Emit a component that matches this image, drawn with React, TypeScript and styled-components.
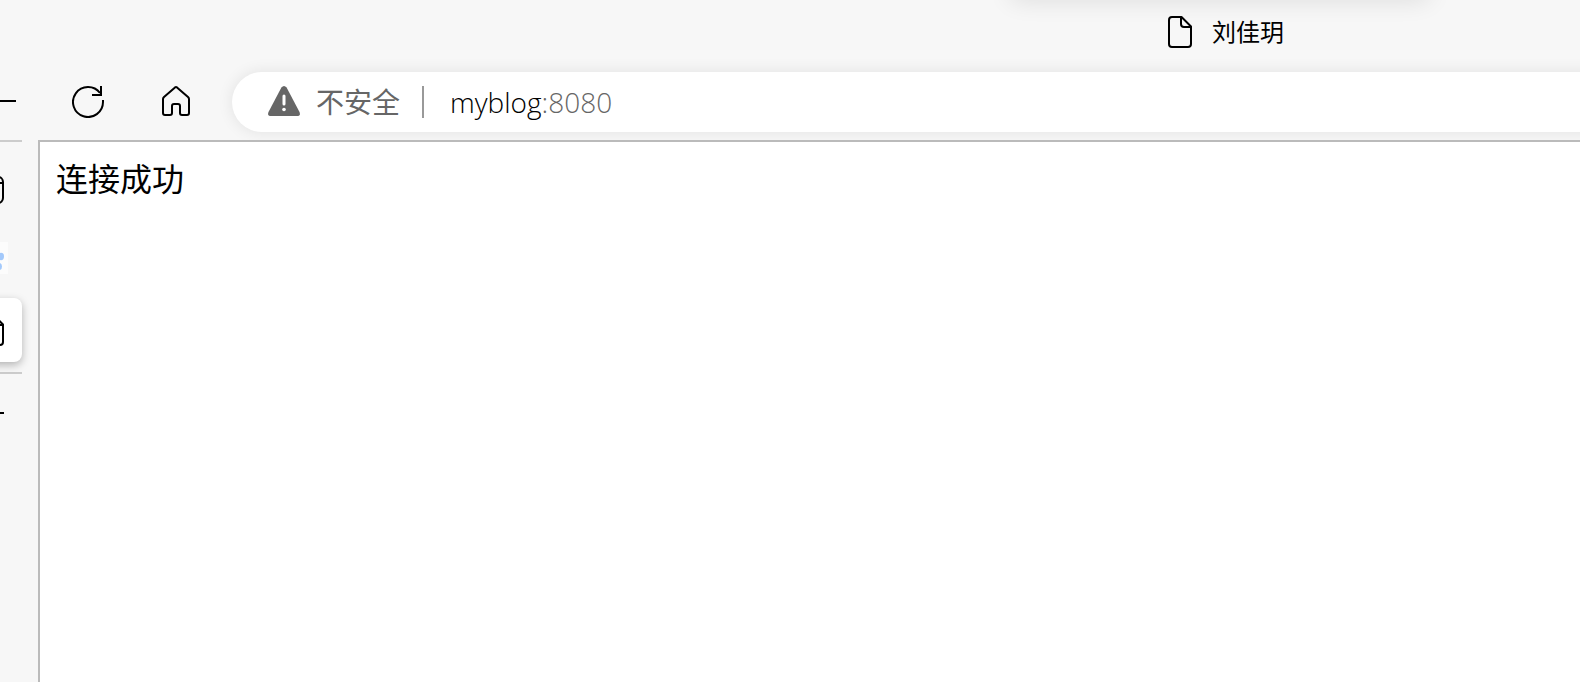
import React from "react";
import styled, { createGlobalStyle } from "styled-components";

const GlobalStyle = createGlobalStyle`
  * { box-sizing: border-box; }
  html, body, #root { height: 100%; }
  body {
    margin: 0;
    overflow: hidden;
    background: #f7f7f7;
    color: #000;
    font-family: "Open Sans", "Noto Sans CJK SC", sans-serif;
  }
  svg { display: block; flex: none; }
`;

const Window = styled.div`
  display: flex;
  flex-direction: column;
  min-height: 100vh;
  overflow: hidden;
`;

const TitleBar = styled.header`
  display: flex;
  justify-content: flex-end;
  align-items: center;
  gap: 20px;
  height: 64px;
  padding-right: 296px;
  position: relative;
`;

const HoverCardShadow = styled.div`
  position: absolute;
  right: 150px;
  bottom: 100%;
  width: 420px;
  height: 20px;
  border-radius: 8px;
  box-shadow: 0 0 24px rgba(0, 0, 0, 0.12);
`;

const WindowTitle = styled.h1`
  margin: 0;
  font-size: 24px;
  line-height: 32px;
  font-weight: 400;
`;

const Toolbar = styled.nav`
  display: flex;
  align-items: center;
  height: 76px;
  margin: 0 -24px 0 -44px;
`;

const IconButton = styled.button`
  display: flex;
  flex: none;
  justify-content: center;
  align-items: center;
  width: 88px;
  height: 60px;
  padding: 0;
  border: 0;
  background: none;
  color: inherit;
`;

const AddressBar = styled.div`
  display: flex;
  flex: 1;
  align-items: center;
  height: 60px;
  margin-left: 12px;
  padding-left: 36px;
  border-radius: 30px 0 0 30px;
  background: #fff;
  box-shadow: 0 0 16px rgba(0, 0, 0, 0.09);
  font-size: 28px;
  line-height: 40px;
`;

const SiteInfo = styled.button`
  display: flex;
  align-items: center;
  gap: 16px;
  padding: 0 22px 0 0;
  border: 0;
  background: none;
  color: #666;
  font: inherit;
  font-weight: 400;
`;

const Separator = styled.span`
  width: 2px;
  height: 32px;
  margin-right: 26px;
  background: #999;
`;

const Url = styled.div`
  flex: 1;
  font-weight: 300;
`;

const Port = styled.span`
  color: #666;
`;

const Body = styled.div`
  display: flex;
  flex: 1;
`;

const Sidebar = styled.aside`
  flex: none;
  width: 38px;
  padding-right: 16px;
`;

const Divider = styled.hr`
  height: 2px;
  margin: 0;
  border: 0;
  background: #ccc;
`;

const TabList = styled.div`
  display: flex;
  flex-direction: column;
  gap: 8px;
  padding: 12px 0 10px;
`;

const SideButton = styled.button<{ $active?: boolean }>`
  display: flex;
  justify-content: flex-end;
  align-items: center;
  width: 72px;
  height: 64px;
  margin-left: -50px;
  padding: 0 18px 0 0;
  border: 0;
  border-radius: 8px;
  background: ${(p) => (p.$active ? "#fff" : "none")};
  box-shadow: ${(p) => (p.$active ? "0 3px 9px rgba(0, 0, 0, 0.28)" : "none")};
  color: inherit;
`;

const NewTab = styled.div`
  padding-top: 8px;
`;

const Favicon = styled.span`
  display: flex;
  margin-right: -4px;
  background: #fcfcfc;
`;

const Page = styled.main`
  flex: 1;
  padding: 16px;
  border: solid #bbb;
  border-width: 2px 0 0 2px;
  background: #fff;
  font-size: 32px;
  line-height: 42px;
  font-weight: 400;
`;

const Message = styled.p`
  margin: 0;
`;

const stroke = { fill: "none", stroke: "currentColor", strokeWidth: 2 };

const DocumentIcon = () => (
  <svg width="24" height="32" viewBox="0 0 24 32" {...stroke} strokeLinejoin="round">
    <path d="M4 1H13.5L23 10.5V28Q23 31 20 31H4Q1 31 1 28V4Q1 1 4 1Z" />
    <path d="M13 1V8Q13 11 16 11H23" />
  </svg>
);

const PanelIcon = () => (
  <svg width="28" height="36" viewBox="0 0 28 36" {...stroke}>
    <rect x="1" y="9" width="26" height="26" rx="5" />
    <path d="M1 15H27" />
  </svg>
);

const BackIcon = () => (
  <svg width="32" height="32" viewBox="0 0 32 32" {...stroke}>
    <path d="M32 15H2M15 2L2 15L15 28" />
  </svg>
);

const ReloadIcon = () => (
  <svg width="32" height="32" viewBox="0 0 32 32" {...stroke}>
    <path d="M31 14V16A15 15 0 1 1 28 7" />
    <path d="M29 0V9H20" />
  </svg>
);

const HomeIcon = () => (
  <svg width="28" height="32" viewBox="0 0 28 32" {...stroke} strokeLinejoin="round">
    <path d="M13 1.4Q14 .7 15 1.4L26 11Q27 12 27 13V27Q27 29 25 29H20Q18 29 18 27V20Q18 18 16 18H12Q10 18 10 20V27Q10 29 8 29H3Q1 29 1 27V13Q1 12 2 11Z" />
  </svg>
);

const WarningIcon = () => (
  <svg width="32" height="32" viewBox="0 0 32 32">
    <path d="M13.4 1.5Q16-1.5 18.6 1.5L31.5 26Q33 30 29 30H3Q-1 30 .5 26Z" fill="#666" />
    <path d="M16 10V18" stroke="#fff" strokeWidth="3" strokeLinecap="round" />
    <circle cx="16" cy="23.5" r="1.8" fill="#fff" />
  </svg>
);

const PawIcon = () => (
  <svg width="32" height="32" viewBox="0 0 32 32" fill="#a3c9fb">
    <ellipse cx="25" cy="14.5" rx="3" ry="3.7" />
    <ellipse cx="23" cy="24.5" rx="3" ry="3.7" />
    <ellipse cx="10" cy="9" rx="3" ry="4" />
    <ellipse cx="18" cy="7" rx="3" ry="4" />
  </svg>
);

const PlusIcon = () => (
  <svg width="28" height="32" viewBox="0 0 28 32" {...stroke}>
    <path d="M0 15H28M14 1V29" />
  </svg>
);

export default function App() {
  return (
    <Window>
      <GlobalStyle />
      <TitleBar>
        <HoverCardShadow />
        <DocumentIcon />
        <WindowTitle>刘佳玥</WindowTitle>
      </TitleBar>
      <Toolbar>
        <IconButton aria-label="返回"><BackIcon /></IconButton>
        <IconButton aria-label="刷新"><ReloadIcon /></IconButton>
        <IconButton aria-label="主页"><HomeIcon /></IconButton>
        <AddressBar>
          <SiteInfo>
            <WarningIcon />
            不安全
          </SiteInfo>
          <Separator />
          <Url role="textbox" aria-label="地址" tabIndex={0}>
            myblog<Port>:8080</Port>
          </Url>
        </AddressBar>
      </Toolbar>
      <Body>
        <Sidebar>
          <Divider />
          <TabList>
            <SideButton aria-label="标签页操作"><PanelIcon /></SideButton>
            <SideButton aria-label="百度"><Favicon><PawIcon /></Favicon></SideButton>
            <SideButton aria-label="刘佳玥" $active><DocumentIcon /></SideButton>
          </TabList>
          <Divider />
          <NewTab>
            <SideButton aria-label="新建标签页"><PlusIcon /></SideButton>
          </NewTab>
        </Sidebar>
        <Page>
          <Message>连接成功</Message>
        </Page>
      </Body>
    </Window>
  );
}
